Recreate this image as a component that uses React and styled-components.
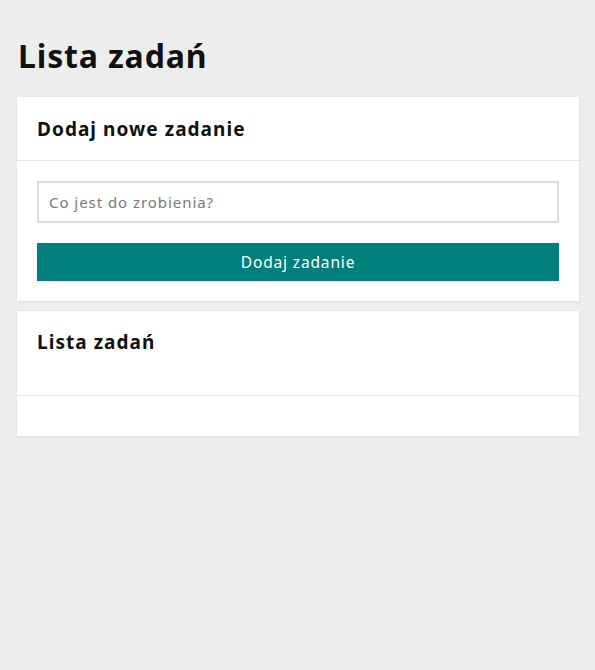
import React, { useState } from 'react'
import styled, { createGlobalStyle } from 'styled-components'

const GlobalStyle = createGlobalStyle`
  html, body {
    margin: 0;
    padding: 0;
    background: #ededed;
  }
  body {
    font-family: "Noto Sans", "Open Sans", sans-serif;
    color: #111;
  }
`

const Page = styled.div`
  padding: 0 16px 0 17px;
  min-height: 670px;
  box-sizing: border-box;
`

const Title = styled.h1`
  margin: 0;
  padding: 36px 0 22px 1px;
  font-size: 32px;
  line-height: 39px;
  font-weight: 700;
  letter-spacing: 0.85px;
`

const Card = styled.section`
  background: #fff;
  box-shadow: 0 1px 3px rgba(0, 0, 0, 0.08);
  margin-bottom: 10px;
`

const CardHeader = styled.div`
  padding: ${p => (p.$tall ? '18px 20px 39px' : '19px 20px 17px')};
  border-bottom: 1px solid #e2e2e2;
`

const CardTitle = styled.h2`
  margin: 0;
  font-size: 19px;
  line-height: 27px;
  font-weight: 700;
  letter-spacing: 1.05px;
`

const CardBody = styled.div`
  padding: 20px;
  display: flex;
  flex-direction: column;
  gap: 20px;
`

const Input = styled.input`
  height: 42px;
  box-sizing: border-box;
  border: 2px solid #dcdcdc;
  padding: 0 10px;
  font-family: inherit;
  font-size: 15px;
  letter-spacing: 0.95px;
  color: #333;
  outline: none;
  &::placeholder {
    color: #7a7a7a;
  }
`

const Button = styled.button`
  height: 38px;
  border: none;
  background: #007f7c;
  color: #fff;
  font-family: inherit;
  font-size: 15.5px;
  letter-spacing: 0.85px;
  cursor: pointer;
`

export default function App() {
  const [text, setText] = useState('')
  const [tasks, setTasks] = useState([])

  const addTask = () => {
    if (!text.trim()) return
    setTasks([...tasks, text.trim()])
    setText('')
  }

  return (
    <Page>
      <GlobalStyle />
      <Title>Lista zadań</Title>
      <Card>
        <CardHeader>
          <CardTitle>Dodaj nowe zadanie</CardTitle>
        </CardHeader>
        <CardBody>
          <Input
            placeholder="Co jest do zrobienia?"
            value={text}
            onChange={e => setText(e.target.value)}
          />
          <Button onClick={addTask}>Dodaj zadanie</Button>
        </CardBody>
      </Card>
      <Card>
        <CardHeader $tall>
          <CardTitle>Lista zadań</CardTitle>
        </CardHeader>
        <CardBody>
          {tasks.map((t, i) => <div key={i}>{t}</div>)}
        </CardBody>
      </Card>
    </Page>
  )
}
